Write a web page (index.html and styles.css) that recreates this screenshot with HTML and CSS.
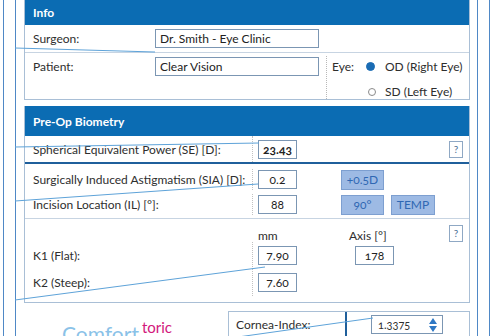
FILE: index.html
```html
<!DOCTYPE html>
<html>
<head>
<meta charset="utf-8">
<link rel="stylesheet" href="styles.css">
</head>
<body>
<div class="frame">
  <div class="inner">
    <section class="panel">
      <div class="head">Info</div>
      <div class="row surgeon">
        <span class="lbl">Surgeon:</span>
        <span class="field">Dr. Smith - Eye Clinic</span>
      </div>
      <div class="row patient">
        <span class="lbl">Patient:</span>
        <span class="field">Clear Vision</span>
        <div class="eye">
          <span class="eye-lbl">Eye:</span>
          <div class="radios">
            <div class="opt"><span class="dot on"></span>OD (Right Eye)</div>
            <div class="opt"><span class="dot"></span>SD (Left Eye)</div>
          </div>
        </div>
      </div>
    </section>

    <section class="panel bio">
      <div class="head tall">Pre-Op Biometry</div>
      <div class="row se">
        <span class="lbl wide">Spherical Equivalent Power (SE) [D]:</span>
        <div class="val"><span class="num bold">23.43</span></div>
        <span class="help">?</span>
      </div>
      <div class="group sia">
        <div class="row2">
          <span class="lbl wide">Surgically Induced Astigmatism (SIA) [D]:</span>
          <div class="val"><span class="num">0.2</span></div>
          <span class="btn b1">+0.5D</span>
        </div>
        <div class="row2">
          <span class="lbl wide">Incision Location (IL) [°]:</span>
          <div class="val"><span class="num">88</span></div>
          <span class="btn b1">90°</span>
          <span class="btn b2">TEMP</span>
        </div>
      </div>
      <div class="group k">
        <div class="krow khead">
          <span class="lbl wide"></span>
          <span class="kcol">mm</span>
          <span class="kax">Axis [°]</span>
          <span class="help">?</span>
        </div>
        <div class="krow">
          <span class="lbl wide">K1 (Flat):</span>
          <div class="val"><span class="num">7.90</span></div>
          <span class="num axis">178</span>
        </div>
        <div class="krow">
          <span class="lbl wide">K2 (Steep):</span>
          <div class="val"><span class="num">7.60</span></div>
        </div>
      </div>
    </section>

    <div class="bottom">
      <div class="brand"><span class="comfort">Comfort</span><span class="toric">toric</span></div>
      <div class="cornea">
        <span class="clbl">Cornea-Index:</span>
        <div class="cval">
          <span class="spin">1.3375<svg class="arrows" width="8" height="14" viewBox="0 0 8 14"><path d="M4 0 L8 6 L0 6 Z M0 8 L8 8 L4 14 Z" fill="#2f78c4"/></svg></span>
        </div>
      </div>
    </div>
  </div>
</div>
<svg class="overlay" width="493" height="336" viewBox="0 0 493 336">
  <g stroke="#5ea3d9" stroke-width="1" fill="none">
    <line x1="15" y1="48" x2="155" y2="52"/>
    <line x1="15" y1="147" x2="259" y2="143"/>
    <line x1="15" y1="201" x2="258" y2="184"/>
    <line x1="15" y1="300" x2="265" y2="267"/>
    <line x1="238" y1="337" x2="373" y2="318"/>
  </g>
</svg>
</body>
</html>
```
FILE: styles.css
```css
* { box-sizing: border-box; }
html, body { margin: 0; padding: 0; }
body {
  width: 493px;
  height: 336px;
  overflow: hidden;
  position: relative;
  background: #fff;
  color: #2e2e2e;
  font-family: Lato, "Noto Sans", sans-serif;
  font-size: 12px;
}
.frame {
  margin-left: 3px;
  width: 487px;
  height: 336px;
  border-left: 1px solid #4f88c6;
  border-right: 1px solid #4f88c6;
  padding: 0 11px;
}
.inner {
  height: 100%;
  border-left: 1px solid #4f88c6;
  border-right: 1px solid #4f88c6;
  padding: 0 7px 0 8px;
}
.panel {
  border: 1px solid #a9bfd6;
  border-top: 0;
}
.head {
  background: #0b6cb3;
  color: #fff;
  font-weight: 700;
  height: 25px;
  padding-left: 8px;
  display: flex;
  align-items: center;
}
.head.tall { height: 30px; }
.row {
  display: flex;
  align-items: center;
  padding-left: 8px;
  border-bottom: 1px solid #c7d4e2;
}
.lbl { width: 122px; flex: none; }
.lbl.wide { width: 219px; }
.field {
  width: 164px;
  height: 19px;
  border: 1px solid #7b96b3;
  padding: 0 4px;
  display: flex;
  align-items: center;
  color: #222;
}
.surgeon { height: 28px; }
.patient {
  height: 46px;
  align-items: flex-start;
  padding-top: 4px;
  border-bottom: 0;
}
.patient .lbl { line-height: 19px; }
.eye {
  margin-left: 7px;
  margin-top: -1px;
  height: 43px;
  border-left: 1px dotted #b8b8b8;
  padding-left: 5px;
  display: flex;
  align-items: flex-start;
}
.eye-lbl { line-height: 21px; width: 33px; }
.radios { display: flex; flex-direction: column; gap: 4px; }
.opt { display: flex; align-items: center; height: 21px; flex: none; }
.dot {
  width: 8px; height: 8px; border-radius: 50%;
  border: 1px solid #8a8a8a;
  margin: 0 10px 0 2px;
}
.dot.on { width: 9px; height: 9px; background: #1a6cb4; border-color: #1a6cb4; margin-left: 1px; margin-right: 10px; }
.opt:last-child .dot { margin-left: 3px; margin-right: 9px; }

.bio { margin-top: 6px; }
.se { height: 28px; border-bottom: 2px solid #1f5f9b; }
.val {
  align-self: stretch;
  border-left: 1px dotted #c2c2c2;
  padding-left: 5px;
  display: flex;
  align-items: center;
}
.num {
  width: 39px;
  height: 19px;
  border: 1px solid #7b96b3;
  display: flex;
  align-items: center;
  justify-content: center;
  color: #222;
  font-variant-numeric: oldstyle-nums;
}
.num.bold { font-weight: 700; }
.help {
  margin-left: auto;
  margin-right: 6px;
  width: 14px;
  height: 17px;
  border: 1px solid #8fa8c4;
  color: #4d6f96;
  font-size: 10px;
  display: flex;
  align-items: center;
  justify-content: center;
}
.group { padding-left: 8px; border-bottom: 1px solid #c7d4e2; }
.sia { padding-top: 5px; padding-bottom: 3px; display: flex; flex-direction: column; gap: 4px; }
.row2 { display: flex; align-items: center; height: 21px; }
.btn {
  height: 20px;
  background: #9dbae4;
  border: 1px solid #7d9fd0;
  color: #2f68b3;
  display: flex;
  align-items: center;
  justify-content: center;
  font-variant-numeric: oldstyle-nums;
}
.b1 { width: 43px; margin-left: 44px; }
.b2 { width: 44px; margin-left: 7px; }
.k { padding-top: 5px; padding-bottom: 6px; border-bottom: 0; }
.krow { display: flex; align-items: center; height: 27px; }
.krow.khead { height: 18px; }
.kcol { width: 97px; padding-left: 6px; padding-top: 5px; }
.kax { width: 60px; padding-top: 5px; }
.axis { margin-left: 58px; }

.bottom { display: flex; padding-top: 8px; }
.brand { padding-left: 38px; padding-top: 7px; white-space: nowrap; }
.comfort { font-size: 21px; color: #8ac2e8; }
.toric { font-size: 15px; color: #d2187c; margin-left: 3px; vertical-align: 9px; }
.cornea {
  margin-left: auto;
  width: 242px;
  height: 27px;
  border: 1px solid #a9bfd6;
  display: flex;
}
.clbl { width: 118px; padding-left: 7px; display: flex; align-items: center; border-right: 2px solid #1f5f9b; }
.cval { flex: 1; display: flex; align-items: center; padding-left: 24px; }
.spin {
  width: 72px;
  height: 19px;
  border: 1px solid #7b96b3;
  display: flex;
  align-items: center;
  padding-left: 6px;
  font-size: 11px;
  font-variant-numeric: oldstyle-nums;
}
.arrows { margin-left: auto; margin-right: 5px; }
.overlay { position: absolute; left: 0; top: 0; pointer-events: none; }
```
